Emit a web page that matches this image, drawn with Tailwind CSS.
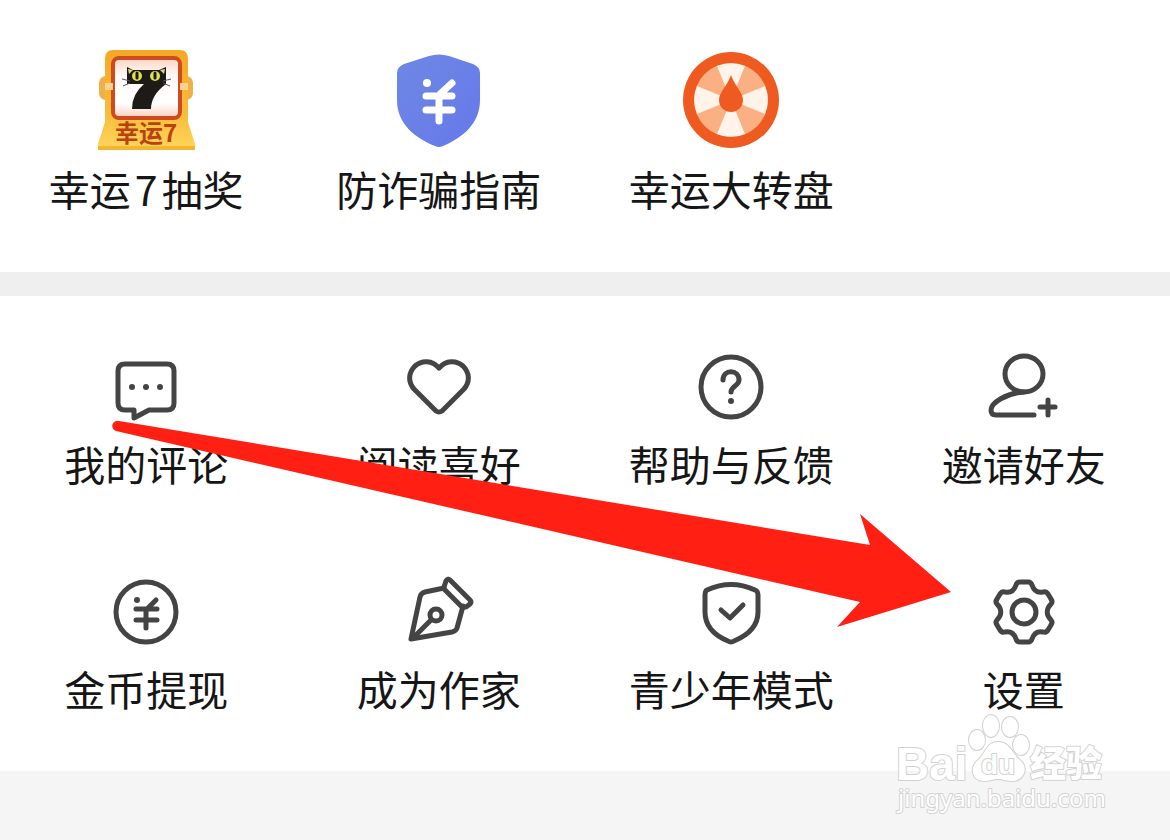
<!DOCTYPE html>
<html lang="zh-CN">
<head>
    <meta charset="UTF-8">
    <meta name="viewport" content="width=device-width, initial-scale=1.0">
    <title>我的</title>
    <script src="https://cdn.jsdelivr.net/npm/@tailwindcss/browser@4"></script>
</head>
<body class="relative min-h-screen overflow-x-hidden bg-[#f5f5f5] font-['Noto_Sans_CJK_SC',sans-serif] text-[41px] leading-[60px] text-[#161616]">

<!-- Activities -->
<section class="grid grid-cols-4 bg-white pt-[50px] pb-[54px]">
    <button class="flex flex-col items-center gap-2 whitespace-nowrap">
        <svg class="size-[100px]" viewBox="0 0 100 100">
            <defs>
                <linearGradient id="gold" x1="0" y1="0" x2="0" y2="1">
                    <stop offset="0" stop-color="#f5a823"/>
                    <stop offset="0.65" stop-color="#f8bd3c"/>
                    <stop offset="1" stop-color="#ffd65c"/>
                </linearGradient>
                <linearGradient id="screen" x1="0" y1="0" x2="0" y2="1">
                    <stop offset="0" stop-color="#fbd5c4"/>
                    <stop offset="0.3" stop-color="#fffaf8"/>
                    <stop offset="0.75" stop-color="#fff"/>
                    <stop offset="1" stop-color="#fbd0bd"/>
                </linearGradient>
            </defs>
            <rect x="3" y="26" width="94" height="24" rx="7" fill="#eeb04a"/>
            <path d="M17 0H84Q92 0 92 9V72L99 94V100H2V94L9 72V9Q9 0 17 0Z" fill="url(#gold)"/>
            <path d="M2 96H99V100H2Z" fill="#f2b632"/>
            <rect x="17" y="8" width="67" height="60" rx="6" fill="url(#screen)" stroke="#cf4a1e" stroke-width="4"/>
            <path d="M9 33h8v7H9zM84 33h8v7h-8z" fill="#fbd28c"/>
            <path d="M31 17L37 20H63L70 17V34Q55 45 55 59H36Q36 44 48 34H31Z" fill="#1d1b18"/>
            <path d="M32 19l5 1-4 4zM69 19l-5 1 4 4z" fill="#d9d97a"/>
            <circle cx="41" cy="26" r="5" fill="#dfe04a"/>
            <circle cx="59" cy="26" r="5" fill="#dfe04a"/>
            <path d="M41 23v5M59 23v5" stroke="#1d1b18" stroke-width="3" stroke-linecap="round"/>
            <path d="M34 31l-8-2M34 33l-7 3M67 31l8-2M67 33l7 3" stroke="#555" stroke-width="1"/>
            <text x="50" y="92" text-anchor="middle" font-size="24" font-weight="700" fill="#b9420f">幸运7</text>
        </svg>
        <span>幸运<span class="px-1">7</span>抽奖</span>
    </button>
    <button class="flex flex-col items-center gap-2 whitespace-nowrap">
        <svg class="size-[100px]" viewBox="0 0 100 100" fill="none" stroke="#fff" stroke-width="7" stroke-linecap="round">
            <defs>
                <linearGradient id="shield" x1="0" y1="0" x2="1" y2="1">
                    <stop offset="0" stop-color="#6e88e4"/>
                    <stop offset="1" stop-color="#6678ea"/>
                </linearGradient>
            </defs>
            <path d="M40 6Q50 3 60 6L84 14Q91 17 91 23V50C91 74 73 88 54 96Q50 98 46 96C26 88 8 74 8 50V23Q8 17 15 14Z" fill="url(#shield)" stroke="none"/>
            <circle cx="38" cy="33" r="4" fill="#fff" stroke="none"/>
            <path d="M63 33L51 44M37 46H63M37 60H63M50 46V71"/>
        </svg>
        <span>防诈骗指南</span>
    </button>
    <button class="flex flex-col items-center gap-2 whitespace-nowrap">
        <svg class="size-[100px]" viewBox="0 0 100 100">
            <circle cx="50" cy="50" r="48" fill="#ee5a20"/>
            <circle cx="50" cy="50" r="37" fill="#fbb083"/>
            <path d="M50 50L36 16A37 37 0 0 1 64 16ZM50 50L84 36A37 37 0 0 1 84 64ZM50 50L64 84A37 37 0 0 1 36 84ZM50 50L16 64A37 37 0 0 1 16 36Z" fill="#fff3ea"/>
            <path d="M50 25C53 35 62 42 62 50A12 12 0 0 1 38 50C38 42 47 35 50 25Z" fill="#ee5a20"/>
        </svg>
        <span>幸运大转盘</span>
    </button>
</section>

<div class="h-6 bg-[#efefef]"></div>

<!-- Services -->
<section class="grid grid-cols-4 gap-y-[85px] bg-white pt-[57px] pb-[53px]">
    <button class="flex flex-col items-center gap-3 whitespace-nowrap">
        <svg class="size-[68px] overflow-visible" viewBox="0 0 68 68" fill="none" stroke="#444" stroke-width="5" stroke-linejoin="round">
            <path d="M22 57H13Q6 57 6 50V18Q6 11 13 11H55Q62 11 62 18V50Q62 57 55 57H37L22 65Z"/>
            <path d="M20 34h0M34 34h0M48 34h0" stroke-width="6" stroke-linecap="round"/>
        </svg>
        <span>我的评论</span>
    </button>
    <button class="flex flex-col items-center gap-3 whitespace-nowrap">
        <svg class="size-[68px] overflow-visible" viewBox="0 0 68 68" fill="none" stroke="#444" stroke-width="5" stroke-linejoin="round">
            <path d="M34 15C27 7 17 7 10 13C3 20 3 29 9 36L31 58Q34 60 37 58L59 36C65 29 65 20 58 13C51 7 41 7 34 15Z"/>
        </svg>
        <span>阅读喜好</span>
    </button>
    <button class="flex flex-col items-center gap-3 whitespace-nowrap">
        <svg class="size-[68px] overflow-visible" viewBox="0 0 68 68" fill="none" stroke="#444" stroke-width="5" stroke-linecap="round">
            <circle cx="34" cy="34" r="30"/>
            <path d="M26 27C26 16 42 16 42 27C42 33 34 33 34 39"/>
            <path d="M34 48h0" stroke-width="6"/>
        </svg>
        <span>帮助与反馈</span>
    </button>
    <button class="flex flex-col items-center gap-3 whitespace-nowrap">
        <svg class="size-[68px] overflow-visible" viewBox="0 0 68 68" fill="none" stroke="#444" stroke-width="5" stroke-linecap="round">
            <ellipse cx="34" cy="21" rx="19" ry="18"/>
            <path d="M34 39C16 40 1 50 1 57Q1 62 6 62H44"/>
            <path d="M50 54H65M58 47V62"/>
        </svg>
        <span>邀请好友</span>
    </button>
    <button class="flex flex-col items-center gap-3 whitespace-nowrap">
        <svg class="size-[68px] overflow-visible" viewBox="0 0 68 68" fill="none" stroke="#444" stroke-width="5" stroke-linecap="round">
            <circle cx="34" cy="34" r="30"/>
            <path d="M44 22L35 31M24 31H45M24 42H45M34 31V50"/>
            <path d="M25 22h0" stroke-width="6"/>
        </svg>
        <span>金币提现</span>
    </button>
    <button class="flex flex-col items-center gap-3 whitespace-nowrap">
        <svg class="size-[68px] overflow-visible" viewBox="0 0 68 68" fill="none" stroke="#444" stroke-width="5" stroke-linejoin="round" stroke-linecap="round">
            <path d="M39 10L20 14Q16 15 15 19L6 61L47 54Q51 53 52 50L58 28"/>
            <path d="M39 9L41 3Q43 0 45 2L65 22Q67 24 65 26L61 29Q58 30 56 28L40 12Q39 11 39 9Z"/>
            <circle cx="31" cy="37" r="6"/>
            <path d="M26 42L8 60"/>
        </svg>
        <span>成为作家</span>
    </button>
    <button class="flex flex-col items-center gap-3 whitespace-nowrap">
        <svg class="size-[68px] overflow-visible" viewBox="0 0 68 68" fill="none" stroke="#444" stroke-width="5" stroke-linejoin="round" stroke-linecap="round">
            <path d="M10 12Q34 1 58 12Q61 13 61 17V34C61 49 49 58 37 63Q34 65 31 63C19 58 8 49 8 34V17Q8 13 10 12Z"/>
            <path d="M24 32L33 40L46 27"/>
        </svg>
        <span>青少年模式</span>
    </button>
    <button class="flex flex-col items-center gap-3 whitespace-nowrap">
        <svg class="size-[68px] overflow-visible" viewBox="-34 -34 68 68" fill="none" stroke="#444" stroke-width="5" stroke-linejoin="round">
            <path d="M-4 -30H4Q7 -30 8 -27C10 -21 14 -19 19 -20Q22 -21 24 -18L27 -13Q29 -10 27 -8C22 -3 22 3 27 8Q29 10 27 13L24 18Q22 21 19 20C14 19 10 21 8 27Q7 30 4 30H-4Q-7 30 -8 27C-10 21 -14 19 -19 20Q-22 21 -24 18L-27 13Q-29 10 -27 8C-22 3 -22 -3 -27 -8Q-29 -10 -27 -13L-24 -18Q-22 -21 -19 -20C-14 -19 -10 -21 -8 -27Q-7 -30 -4 -30Z"/>
            <circle r="12"/>
        </svg>
        <span>设置</span>
    </button>
</section>

<!-- Pointer to the settings entry -->
<svg class="pointer-events-none absolute top-[420px] left-[112px] h-[210px] w-[840px] overflow-visible" viewBox="112 420 840 210" fill="#ff2013">
    <path d="M119 421L870 545L860 514L951 592L837 627L860 602L116 431A5 5 0 0 1 119 421Z"/>
</svg>

<!-- Watermark -->
<svg class="pointer-events-none absolute top-[710px] right-[60px] h-[105px] w-[215px] overflow-visible" viewBox="895 710 215 105" fill="#fff" stroke="#d2d2d2" stroke-width="2" stroke-linejoin="round" paint-order="stroke">
    <text x="896" y="780" font-family="Liberation Sans, sans-serif" font-weight="700" font-size="46">Bai</text>
    <path d="M998 742C1010 742 1012 754 1021 761C1029 769 1023 781 1012 781C1006 781 1003 779 998 779C993 779 990 781 984 781C973 781 969 769 977 761C986 754 986 742 998 742Z"/>
    <ellipse cx="977" cy="740" rx="8" ry="10"/>
    <ellipse cx="991" cy="726" rx="8" ry="11"/>
    <ellipse cx="1010" cy="727" rx="8" ry="10"/>
    <ellipse cx="1021" cy="745" rx="8" ry="10"/>
    <text x="981" y="774" font-family="Liberation Sans, sans-serif" font-weight="700" font-size="28">du</text>
    <text x="1030" y="777" font-family="Noto Sans CJK SC, sans-serif" font-weight="900" font-size="36">经验</text>
    <text x="898" y="807" font-family="Noto Sans, sans-serif" font-size="24">jingyan.baidu.com</text>
</svg>
</body>
</html>
